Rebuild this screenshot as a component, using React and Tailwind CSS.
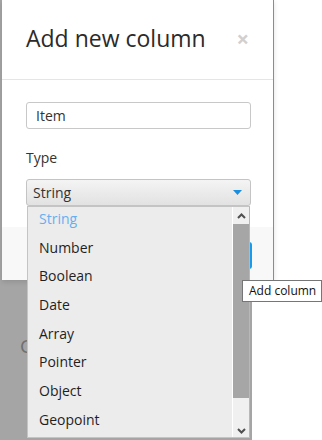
const types = ['String', 'Number', 'Boolean', 'Date', 'Array', 'Pointer', 'Object', 'Geopoint']

function Chevron({ up }) {
  return (
    <svg width="9" height="6" viewBox="0 0 9 6" className="text-[#505050]">
      <polyline
        points={up ? '1,5 4.5,1.5 8,5' : '1,1 4.5,4.5 8,1'}
        fill="none"
        stroke="currentColor"
        strokeWidth="2"
      />
    </svg>
  )
}

export default function App() {
  return (
    <div className="relative w-[322px] h-[440px] overflow-hidden bg-white font-['Open_Sans',sans-serif] text-[#333]">
      {/* page behind the modal */}
      <div className="absolute left-0 top-0 w-[252px] h-full bg-[#a5a5a5]">
        <span className="absolute left-[20px] top-[332px] text-[19px] text-[#6f6f6f]">C</span>
      </div>

      {/* modal */}
      <div className="absolute left-[2px] top-0 w-[272px] h-[280px] bg-white border-r border-[#8c8c8c] flex flex-col shadow-[0_2px_5px_rgba(0,0,0,0.12)]">
        <div className="h-[80px] shrink-0 border-b border-[#e5e5e5] flex items-start justify-between pl-6 pr-[24px] pt-[22px]">
          <h1 className="text-[23px] leading-8 font-normal text-[#2b2b2b]">Add new column</h1>
          <span className="text-[22px] leading-8 font-bold text-[#d0d0d0]">×</span>
        </div>

        <div className="pl-6 pr-[22px] pt-[22px]">
          <div className="h-[27px] border border-[#c8c8c8] rounded-[3px] px-[9px] text-[14px] leading-[25px]">
            Item
          </div>
          <div className="mt-[19px] text-[14px] leading-5">Type</div>
          <div className="mt-[11px] h-[27px] border border-[#c4c4c4] rounded-[3px] bg-gradient-to-b from-[#f4f4f4] to-[#e2e2e2] flex items-center justify-between pl-[6px] pr-[8px] text-[14px]">
            <span>String</span>
            <svg width="9" height="5" viewBox="0 0 9 5">
              <polygon points="0,0 9,0 4.5,5" fill="#1a8fe0" />
            </svg>
          </div>
        </div>

        <div className="mt-[21px] flex-1 bg-[#f8f8f8] flex justify-end items-start pt-[15px] pr-[21px]">
          <button className="h-[27px] w-[110px] rounded-[3px] bg-[#169cee] text-white text-[13px]">
            Add column
          </button>
        </div>
      </div>

      {/* native select dropdown */}
      <div className="absolute left-[27px] top-[206px] w-[223px] h-[232px] bg-[#ececec] border border-[#c4c4c4] border-r-[#b8b8b8] flex overflow-hidden">
        <ul className="flex-1 -mt-[2px] text-[14px]">
          {types.map((t, i) => (
            <li
              key={t}
              className={`h-[28.7px] leading-[28.7px] pl-[11px] ${i === 0 ? 'text-[#66aff0]' : 'text-[#1f1f1f]'}`}
            >
              {t}
            </li>
          ))}
        </ul>
        <div className="w-[17px] bg-[#f0f0f0] border-l border-white flex flex-col">
          <div className="h-[17px] flex items-center justify-center">
            <Chevron up />
          </div>
          <div className="h-[174px] bg-[#a6a6a6]" />
          <div className="flex-1 flex items-end justify-center pb-[3px]">
            <Chevron />
          </div>
        </div>
      </div>

      {/* tooltip */}
      <div className="absolute left-[242px] top-[280px] w-[80px] h-[22px] border border-[#767676] bg-white px-[6px] text-[12px] leading-[20px] text-[#111] whitespace-nowrap overflow-hidden">
        Add column
      </div>
    </div>
  )
}
